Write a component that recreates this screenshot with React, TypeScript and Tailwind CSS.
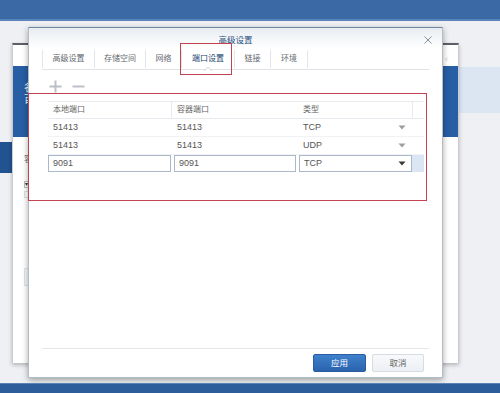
import React from "react";

const Arrow = ({ dark }: { dark?: boolean }) => (
  <svg width="8" height="5" viewBox="0 0 8 5" className="block">
    <path d="M0.5 0.5 L7.5 0.5 L4 4.5 Z" fill={dark ? "#3a3a3a" : "#9a9ea4"} />
  </svg>
);

const tabs = [
  { label: "高级设置", w: "w-[51px]" },
  { label: "存储空间", w: "w-[50px]" },
  { label: "网络", w: "w-[35px]" },
  { label: "端口设置", w: "w-[52px]", active: true },
  { label: "链接", w: "w-[35px]" },
  { label: "环境", w: "w-[36px]" },
];

export default function App() {
  return (
    <div
      className="relative w-[500px] h-[393px] overflow-hidden bg-[#eef0f3]"
      style={{ fontFamily: '"Liberation Sans", "Noto Sans CJK SC", sans-serif' }}
    >
      {/* top blue bar */}
      <div className="h-[21px] bg-[#3b69a6] border-b-[2px] border-[#5b84bb]" />

      {/* far background pieces */}
      <div className="absolute left-0 top-[142px] w-[12px] h-[31px] bg-[#22528f]" />
      <div className="absolute left-[459px] top-[67px] w-[41px] h-[46px] bg-[#dce6f3]" />

      {/* background window */}
      <div className="absolute left-[12px] top-[43px] w-[447px] h-[320px] bg-white border-x border-[#c9cdd2] border-t-[2px] border-t-[#5c6066] shadow-[0_2px_4px_rgba(0,0,0,0.25)]">
        <div className="mt-[21px] h-[71px] bg-[#285ea4] flex flex-col pl-[11px] pt-[16px] text-white text-[10px] leading-[12px]">
          <span>名</span>
          <span>百</span>
        </div>
        <div className="pl-[11px] mt-[16px] text-[9px] text-[#777]">容</div>
        <div className="ml-[11px] mt-[14px] w-[10px] h-[7px] border border-[#bbb] text-[6px] leading-[5px] text-[#333]">▾</div>
        <div className="ml-[11px] mt-[3px] w-[10px] h-[7px] border border-[#ddd]" />
        <div className="ml-[11px] mt-[70px] w-[10px] h-[18px] border border-[#dfe3e8] bg-[#f5f7f9]" />
        <div className="absolute right-[10px] top-[8px] text-[9px] text-[#ccc]">‹</div>
      </div>

      {/* dialog */}
      <div className="absolute left-[28px] top-[27px] w-[415px] h-[351px] bg-white border border-[#b7bcc3] border-t-[#6f87a6] shadow-[0_2px_6px_rgba(0,0,0,0.35)] flex flex-col">
        {/* header */}
        <div className="relative h-[20px] bg-gradient-to-b from-[#e8ecf1] to-white flex justify-center">
          <span className="pt-[7px] text-[8.5px] leading-[10px] text-[#27507f]">高级设置</span>
          <svg className="absolute right-[10px] top-[8px]" width="8" height="8" viewBox="0 0 8 8">
            <path d="M0.5 0.5 L7.5 7.5 M7.5 0.5 L0.5 7.5" stroke="#8a8f96" strokeWidth="1" />
          </svg>
        </div>

        {/* tabs */}
        <div className="mx-[13px] h-[22px] border-b border-[#dfe3e8] flex items-center">
          <span className="w-px h-[18px] bg-[#e3e6ea]" />
          {tabs.map((t) => (
            <div key={t.label} className="flex items-center">
              <div
                className={`relative ${t.w} h-[22px] flex items-center justify-center text-[8px] ${
                  t.active ? "text-[#23466f]" : "text-[#666a70]"
                }`}
              >
                {t.label}
                {t.active && (
                  <svg className="absolute bottom-[-1px] left-1/2 -translate-x-1/2" width="9" height="4" viewBox="0 0 9 4">
                    <path d="M0 4 L4.5 0.5 L9 4" fill="white" stroke="#cfd4da" strokeWidth="1" />
                  </svg>
                )}
              </div>
              <span className="w-px h-[18px] bg-[#e3e6ea]" />
            </div>
          ))}
        </div>

        {/* toolbar */}
        <div className="mt-[10px] h-[13px] pl-[20px] flex items-center gap-[10px]">
          <svg width="13" height="13" viewBox="0 0 13 13">
            <path d="M6.5 0.5 V12.5 M0.5 6.5 H12.5" stroke="#bcc0c6" strokeWidth="2" />
          </svg>
          <svg width="13" height="13" viewBox="0 0 13 13">
            <path d="M0.5 6.5 H12.5" stroke="#bcc0c6" strokeWidth="2" />
          </svg>
        </div>

        {/* table */}
        <div className="ml-[19px] mt-[8px] w-[376px] text-[9px] text-[#555]">
          <div className="flex h-[18px] border-y border-[#e6e9ed] text-[8px] text-[#666]">
            <div className="w-[124px] pl-[5px] flex items-center border-r border-[#e6e9ed]">本地端口</div>
            <div className="w-[125px] pl-[5px] flex items-center">容器端口</div>
            <div className="w-[116px] pl-[6px] flex items-center border-r border-[#e6e9ed]">类型</div>
            <div className="flex-1" />
          </div>
          {[
            ["51413", "51413", "TCP"],
            ["51413", "51413", "UDP"],
          ].map((r, i) => (
            <div key={i} className="flex h-[18px] border-b border-[#f0f2f4]">
              <div className="w-[124px] pl-[5px] flex items-center">{r[0]}</div>
              <div className="w-[125px] pl-[5px] flex items-center">{r[1]}</div>
              <div className="w-[116px] pl-[6px] pr-[7px] flex items-center justify-between">
                <span>{r[2]}</span>
                <Arrow />
              </div>
              <div className="flex-1" />
            </div>
          ))}
          <div className="flex h-[18px] items-stretch pb-px">
            <div className="w-[123px] border border-[#a9b8ca] pl-[4px] flex items-center">9091</div>
            <div className="w-[122px] ml-[3px] border border-[#a9b8ca] pl-[4px] flex items-center">9091</div>
            <div className="w-[113px] ml-[3px] border border-[#a9b8ca] pl-[4px] pr-[5px] flex items-center justify-between">
              <span>TCP</span>
              <Arrow dark />
            </div>
            <div className="flex-1 bg-[#dbe6f4]" />
          </div>
        </div>

        <div className="flex-1" />

        {/* footer */}
        <div className="mx-[13px] border-t border-[#e3e6ea]" />
        <div className="h-[28px] pt-[5px] pr-[18px] flex justify-end gap-[6px]">
          <button className="w-[53px] h-[18px] rounded-[2px] bg-gradient-to-b from-[#3f80cc] to-[#2b63ad] border border-[#2a5d9f] text-white text-[8.5px] flex items-center justify-center">
            应用
          </button>
          <button className="w-[52px] h-[18px] rounded-[2px] bg-gradient-to-b from-[#f8f9fb] to-[#eceff3] border border-[#d6dce3] text-[#666] text-[8.5px] flex items-center justify-center">
            取消
          </button>
        </div>
      </div>

      {/* bottom bar */}
      <div className="absolute left-0 bottom-0 w-[500px] h-[10px] bg-[#2e5d9b] border-t border-[#5a82b8]" />

      {/* red highlight boxes */}
      <div className="absolute left-[180px] top-[43px] w-[52px] h-[32px] border-[1.5px] border-[#c2434f]" />
      <div className="absolute left-[28px] top-[93px] w-[399px] h-[108px] border-[1.5px] border-[#c2434f]" />
    </div>
  );
}
